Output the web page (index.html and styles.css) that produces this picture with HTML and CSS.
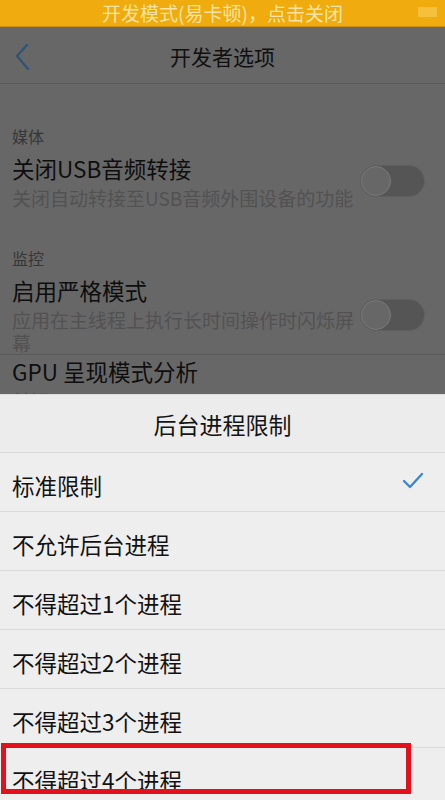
FILE: index.html
```html
<!DOCTYPE html>
<html lang="zh-CN">
<head>
<meta charset="utf-8">
<title>开发者选项</title>
<link rel="stylesheet" href="styles.css">
</head>
<body>
<div class="screen">
  <div class="devbar">
    <span class="devbar-text">开发模式(易卡顿)，点击关闭</span>
    <span class="devbar-badge"></span>
  </div>
  <div class="page">
    <div class="header">
      <svg class="back" width="20" height="30" viewBox="0 0 20 30"><polyline points="13,2 3,13 14,26" fill="none" stroke="#2b5478" stroke-width="2.2" stroke-linecap="round" stroke-linejoin="round"/></svg>
      <div class="header-title">开发者选项</div>
    </div>
    <div class="group first">
      <div class="group-label">媒体</div>
      <div class="item">
        <div class="item-text">
          <div class="item-title">关闭USB音频转接</div>
          <div class="item-sub">关闭自动转接至USB音频外围设备的功能</div>
        </div>
        <div class="toggle"><span class="knob"></span></div>
      </div>
    </div>
    <div class="group">
      <div class="group-label">监控</div>
      <div class="item bordered">
        <div class="item-text">
          <div class="item-title">启用严格模式</div>
          <div class="item-sub">应用在主线程上执行长时间操作时闪烁屏幕</div>
        </div>
        <div class="toggle"><span class="knob"></span></div>
      </div>
      <div class="item">
        <div class="item-text">
          <div class="item-title">GPU 呈现模式分析</div>
          <div class="item-sub">关闭</div>
        </div>
      </div>
    </div>
  </div>
  <div class="sheet">
    <div class="sheet-title">后台进程限制</div>
    <div class="option">
      <span>标准限制</span>
      <svg class="check" width="22" height="18" viewBox="0 0 22 18"><polyline points="2,9 8,15 20,2" fill="none" stroke="#3f86cf" stroke-width="2.4" stroke-linecap="round" stroke-linejoin="round"/></svg>
    </div>
    <div class="option"><span>不允许后台进程</span></div>
    <div class="option"><span>不得超过1个进程</span></div>
    <div class="option"><span>不得超过2个进程</span></div>
    <div class="option"><span>不得超过3个进程</span></div>
    <div class="option"><span>不得超过4个进程</span></div>
  </div>
  <div class="highlight"></div>
</div>
</body>
</html>
```

FILE: styles.css
```css
* { box-sizing: border-box; }
html, body {
  margin: 0;
  padding: 0;
}
body {
  font-family: "Noto Sans CJK SC", "Noto Sans", sans-serif;
  background: #676767;
}
.screen {
  position: relative;
  width: 445px;
  height: 800px;
  overflow: hidden;
  background: #676767;
}
.devbar {
  height: 27px;
  background: #f0ab0f;
  border-bottom: 1px solid #c98f18;
  display: flex;
  align-items: center;
  justify-content: center;
  position: relative;
}
.devbar-text {
  color: #fbe4a2;
  font-size: 19px;
  line-height: 26px;
}
.devbar-badge {
  position: absolute;
  right: 8px;
  top: 7px;
  width: 19px;
  height: 10px;
  background: #f5c13d;
  border-radius: 1px;
}
.page {
  background: #676767;
}
.header {
  height: 57px;
  border-bottom: 1px solid #5c5c5c;
  display: flex;
  align-items: center;
  justify-content: center;
  position: relative;
}
.back {
  position: absolute;
  left: 14px;
  top: 16px;
}
.header-title {
  font-size: 21px;
  color: #101010;
  line-height: 30px;
  margin-top: 2px;
}
.group {
  padding-top: 38px;
}
.group.first {
  padding-top: 41px;
}
.group-label {
  padding-left: 12px;
  font-size: 16px;
  line-height: 22px;
  color: #363636;
  margin-bottom: 6px;
}
.item {
  display: flex;
  align-items: center;
  padding-left: 12px;
  padding-right: 20px;
}
.item.bordered {
  border-bottom: 1px solid #5a5a5a;
}
.item-text {
  flex: 1;
  min-width: 0;
  padding-right: 8px;
}
.item-title {
  font-size: 22.5px;
  line-height: 30px;
  color: #0e0e0e;
}
.item-sub {
  font-size: 19px;
  line-height: 23px;
  color: #525252;
  width: 345px;
  margin-top: 3px;
}
.item + .item .item-title {
  margin-top: 1px;
}
.toggle {
  flex: none;
  width: 65px;
  height: 32px;
  border-radius: 16px;
  background: #555555;
  border: 1px solid #5f5f5f;
  position: relative;
  margin-left: -8px;
}
.knob {
  position: absolute;
  left: 0;
  top: 0;
  width: 30px;
  height: 30px;
  border-radius: 50%;
  background: #676767;
  border: 1px solid #7a7a7a;
}
.sheet {
  position: absolute;
  left: 0;
  right: 0;
  top: 394px;
  bottom: 0;
  background: #efeeef;
  border-top: 1px solid #dcdcdc;
}
.sheet-title {
  height: 58px;
  border-bottom: 1px solid #d9d9d9;
  display: flex;
  align-items: center;
  justify-content: center;
  font-size: 23px;
  color: #141414;
  background: #ececec;
}
.option {
  height: 59px;
  border-bottom: 1px solid #dadada;
  display: flex;
  align-items: center;
  justify-content: space-between;
  padding: 5px 21px 0 12px;
  font-size: 22.5px;
  color: #121212;
}
.check {
  margin-top: -8px;
}
.highlight {
  position: absolute;
  left: 1px;
  top: 743px;
  width: 410px;
  height: 51px;
  border: 5px solid #e3111b;
}
```
